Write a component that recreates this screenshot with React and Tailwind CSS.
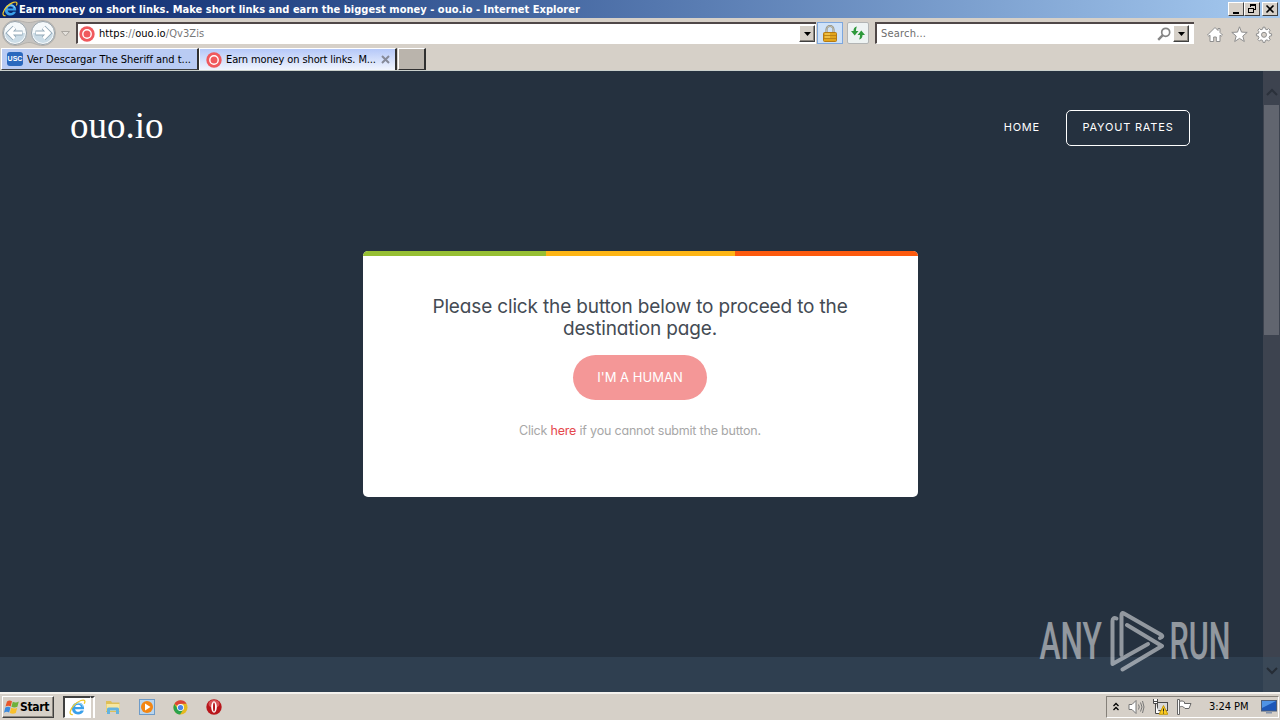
const tahoma = "font-['DejaVu_Sans_Condensed','DejaVu_Sans',sans-serif]";
const raised =
  "border border-t-white border-l-white border-r-[#404040] border-b-[#404040] bg-[#d6d0c8]";

function IeLogo({ className }) {
  return (
    <svg viewBox="0 0 16 16" className={className} fill="none">
      <path
        d="M14.200 9.600H5.700c.2 1.500 1.400 2.400 2.900 2.400 1.100 0 2-.4 2.500-1.200h2.900c-.8 2.300-2.900 3.700-5.500 3.700-3.300 0-5.700-2.300-5.700-5.600s2.400-5.700 5.700-5.700c3.500 0 5.900 2.600 5.700 6.400zM5.800 7.600h5.400C11 6.200 10 5.500 8.500 5.500S6 6.300 5.800 7.600z"
        fill="#3aa0ea"
      />
      <path d="M4.200 7.200C4.700 5.200 6.300 4 8.600 4c2.500 0 4.100 1.300 4.500 3.300" stroke="#9bdcfb" strokeWidth=".9" />
      <path
        d="M3.600 14.700C-.6 15.200.6 9.800 5.200 5.300 9.300 1.300 14 .1 14.800 1.700c.4.800.1 1.700-.5 2.800"
        stroke="#f0c92a"
        strokeWidth="1.200"
      />
    </svg>
  );
}

function OuoIcon() {
  return (
    <svg viewBox="0 0 16 16" className="size-4 shrink-0">
      <circle cx="8" cy="8" r="7.700" fill="#f0595d" />
      <circle cx="8" cy="8" r="4.200" fill="none" stroke="#fff" strokeWidth="1.400" />
    </svg>
  );
}

function DropArrow({ className }) {
  return (
    <span className={`flex items-center justify-center shadow-[inset_-1px_-1px_0_#8b867f] ${raised} ${className}`}>
      <svg viewBox="0 0 7 4" className="h-1 w-[7px]">
        <path d="M0 0h7L3.500 4z" fill="#000" />
      </svg>
    </span>
  );
}

function TitleBar() {
  return (
    <div className="flex h-[18px] items-center bg-linear-to-r from-[#0a246a] to-[#a6caf0] pr-[2px] pl-[2px]">
      <IeLogo className="size-4 shrink-0" />
      <span className="ml-px pt-px text-[11px] leading-4 font-bold tracking-[0.02px] whitespace-nowrap text-white">
        Earn money on short links. Make short links and earn the biggest money - ouo.io - Internet Explorer
      </span>
      <div className="ml-auto flex">
        <button className={`flex h-[14px] w-4 items-center justify-center ${raised}`}>
          <svg viewBox="0 0 12 12" className="size-3">
            <path d="M3 9h6v2H3z" />
          </svg>
        </button>
        <button className={`flex h-[14px] w-4 items-center justify-center ${raised}`}>
          <svg viewBox="0 0 12 12" className="size-3" fill="none" stroke="#000" shapeRendering="crispEdges">
            <path d="M4.500 4V1.500h5v5H8M4 2h6" />
            <path d="M2.500 5.500h5v4h-5zM2 5h6" />
          </svg>
        </button>
        <button className={`ml-[2px] flex h-[14px] w-4 items-center justify-center ${raised}`}>
          <svg viewBox="0 0 12 12" className="size-3" stroke="#000" strokeWidth="1.600">
            <path d="M2.500 2.500l7 7M9.500 2.500l-7 7" />
          </svg>
        </button>
      </div>
    </div>
  );
}

function NavButtons() {
  return (
    <svg viewBox="0 0 74 30" className="h-[30px] w-[74px] shrink-0" fill="none">
      <path
        d="M15 2.500c7 0 9 2 14 2s7-2 14-2a12.500 12.500 0 0 1 0 25c-7 0-9-3-14-3s-7 3-14 3a12.500 12.500 0 0 1 0-25z"
        fill="#c5c3c0"
        stroke="#b4b1ac"
      />
      {[15, 43].map((cx) => (
        <g key={cx}>
          <circle cx={cx} cy="15" r="11.500" fill="#f5f9fb" stroke="#98a3ab" />
          <path d={`M${cx - 10} 15a10 10 0 0 0 20 0z`} fill="#cbdce7" />
        </g>
      ))}
      <path d="M22.500 15H9.500M14.500 9.500L9 15l5.500 5.500" stroke="#93a9b8" strokeWidth="5" />
      <path d="M22 15H9.500M14.500 9.500L9 15l5.500 5.500" stroke="#fff" strokeWidth="3.200" />
      <path d="M35.500 15h13M43.500 9.500L49 15l-5.500 5.500" stroke="#93a9b8" strokeWidth="5" />
      <path d="M36 15h12.500M43.500 9.500L49 15l-5.500 5.500" stroke="#fff" strokeWidth="3.200" />
      <path d="M61.500 13.500h8l-4 4.500z" fill="#e4e1dc" stroke="#aaa6a0" />
    </svg>
  );
}

function AddressRow() {
  return (
    <div className="flex h-[30px] items-center">
      <NavButtons />
      <div className="ml-[2px] flex h-[22px] w-[740px] items-center border-t-2 border-b border-l-2 border-t-[#504848] border-b-white border-l-[#504848] bg-white pl-px">
        <OuoIcon />
        <span className="ml-[4px] pt-[2px] text-[11px] tracking-[0.08px] whitespace-nowrap text-[#777]">
          <span className="text-black">https</span>://<span className="text-black">ouo.io</span>/Qv3Zis
        </span>
        <DropArrow className="mr-px ml-auto h-[17px] w-4" />
      </div>
      <div className="ml-px flex h-[22px] w-[26px] items-center justify-center border border-[#7da7de] bg-[#cfe2f8]">
        <svg viewBox="0 0 14 17" className="h-[17px] w-[14px]">
          <path d="M3.500 8V4.500a3.500 3.500 0 0 1 7 0V8" fill="none" stroke="#8b8878" strokeWidth="2" />
          <path d="M3.500 8V4.500a3.500 3.500 0 0 1 7 0V8" fill="none" stroke="#d9d6c5" strokeWidth=".7" />
          <rect x=".5" y="7.500" width="13" height="9" rx="1" fill="#e2a51c" stroke="#b57a12" />
          <path d="M1 10.500h12M1 13.500h12" stroke="#bd8418" />
          <path d="M2 8.500h5v1H2zM2 11.500h5v1H2z" fill="#f9da6c" />
        </svg>
      </div>
      <div className="ml-[4px] flex h-[22px] w-[22px] items-center justify-center rounded-xs border border-[#b3b5b5] bg-[#eef3f3]">
        <svg viewBox="0 0 16 16" className="size-4" fill="#2f9a3c">
          <path d="M7 1.500C4.500 2 3.500 3.500 3.500 6H1l3.700 4.500L8.500 6H6c0-1.700.2-3 1-4.500z" />
          <path d="M9 14.500c2.500-.5 3.500-2 3.500-4.500H15l-3.700-4.500L7.500 10H10c0 1.700-.2 3-1 4.500z" />
        </svg>
      </div>
      <div className="ml-[6px] flex h-[22px] w-[319px] items-center border-t-2 border-b border-l-2 border-t-[#504848] border-b-white border-l-[#504848] bg-white pl-[4px]">
        <span className="pt-[2px] text-[11px] tracking-[0.2px] text-[#6d6d6d]">Search...</span>
        <svg viewBox="0 0 14 14" className="ml-auto size-[14px]" fill="none" stroke="#858585">
          <circle cx="8.700" cy="5.300" r="4" strokeWidth="1.700" />
          <path d="M5.800 8.200L1.200 12.800" strokeWidth="2.400" />
        </svg>
        <DropArrow className="mr-[5px] ml-[2px] h-[17px] w-4" />
      </div>
      <svg viewBox="0 0 68 18" className="mt-[4px] ml-[12px] h-[18px] w-[68px]" fill="#fff" stroke="#8e8e8e">
        <path d="M9 1.500L1.500 9l1.300 1.200L4 9.200v6.300h3.700v-4.500h2.600v4.500H14V9.200l1.200 1L16.500 9 14 6.500v-4h-2v2z" />
        <path d="M33.500.8l2 5.300 5.700.3-4.400 3.600 1.500 5.500-4.800-3.100-4.800 3.100 1.500-5.500-4.400-3.600 5.700-.3z" />
        <path d="M56.700 3.100L57 1.200h2l.3 1.900 1.700.7 1.600-1.200 1.600 1.600-1.200 1.600.7 1.700 1.900.3v2l-1.900.3-.7 1.700 1.200 1.600-1.600 1.600-1.600-1.200-1.700.7-.3 1.900h-2l-.3-1.900-1.700-.7-1.600 1.200-1.600-1.600 1.200-1.600-.7-1.700-1.900-.3v-2l1.900-.3.7-1.700-1.200-1.600 1.600-1.600L55 3.800z" />
        <circle cx="58" cy="8.800" r="2.500" fill="#d6d0c8" />
      </svg>
    </div>
  );
}

function TabRow() {
  return (
    <div className="flex h-[23px] items-start border-b border-[#c9cfcb] pl-px">
      <div className="flex h-[22px] w-[198px] items-center border-t border-r-2 border-b border-l border-t-white border-r-[#303030] border-b-[#404040] border-l-white bg-[#b9cbf3] pl-[5px]">
        <span className="flex h-[14px] w-4 items-center justify-center rounded-[3px] bg-[#2a68bd] font-['Liberation_Sans',sans-serif] text-[7px] font-bold text-white">
          USC
        </span>
        <span className="ml-[4px] pt-[2px] text-[11px] tracking-[-0.04px] whitespace-nowrap">
          Ver Descargar The Sheriff and t...
        </span>
      </div>
      <div className="flex h-[22px] w-[198px] items-center border-t border-r-2 border-l border-t-white border-r-[#303030] border-l-white bg-linear-to-b from-[#b5c8f8] to-[#f1f5fd] pl-[6px]">
        <OuoIcon />
        <span className="ml-[4px] pt-[2px] text-[11px] tracking-[-0.12px] whitespace-nowrap">
          Earn money on short links. M...
        </span>
        <svg viewBox="0 0 9 9" className="mr-[5px] ml-auto size-[9px]" stroke="#868a98" strokeWidth="2">
          <path d="M1 1l7 7M8 1L1 8" />
        </svg>
      </div>
      <div className="ml-px h-[22px] w-[28px] border-t border-r-2 border-b border-l border-t-white border-r-[#303030] border-b-[#303030] border-l-white bg-[#bab4ac]" />
    </div>
  );
}

function Card() {
  return (
    <main className="mx-auto h-[246px] w-[555px] overflow-hidden rounded-[5px] bg-white text-center font-['Inter',sans-serif] [font-feature-settings:'cv11']">
      <div className="flex h-[5px]">
        <span className="w-[183px] bg-[#96bf33]" />
        <span className="w-[189px] bg-[#fdb515]" />
        <span className="flex-1 bg-[#fc5a0e]" />
      </div>
      <h1 className="mt-[40px] text-[19px] leading-[22px] tracking-[-0.15px] text-[#444b54]">
        Please click the button below to proceed to the
        <br />
        destination page.
      </h1>
      <button className="mt-[15px] h-[45px] w-[134px] rounded-full bg-[#f49797] text-[13px] tracking-[0.02px] text-white">
        I'M A HUMAN
      </button>
      <p className="mt-[21px] text-[12.500px] leading-[20px] tracking-[-0.2px] text-[#a7a7a7]">
        Click <a className="text-[#e5484d]">here</a> if you cannot submit the button.
      </p>
    </main>
  );
}

function Watermark() {
  return (
    <svg
      viewBox="0 0 200 64"
      className="absolute right-[44px] bottom-[19px] h-[64px] w-[200px] opacity-50"
      fill="#fff"
    >
      <g fontFamily="Roboto, sans-serif" fontSize="51" fontWeight="500">
        <text transform="translate(3.500 50) scale(.62 1)">ANY</text>
        <text transform="translate(133.500 50) scale(.6 1)">RUN</text>
      </g>
      <g fill="none" stroke="#fff" strokeWidth="4" strokeLinejoin="round" strokeLinecap="round">
        <path d="M85.500 46V6q0-3 2.500-1.500L125.500 26q2 1.500-1.500 3" />
        <path d="M80.500 9.500Q76.500 8 76.500 12v43L112 35" />
        <path d="M91 16l35 21-39.500 23.500" />
      </g>
    </svg>
  );
}

function Page() {
  return (
    <div className="relative flex h-[621px] bg-[#25313f]">
      <div className="flex w-[1263px] flex-col">
        <header className="mt-[39px] flex h-9 items-center pr-[73px] pl-[70px] text-white">
          <span className="pb-[5px] font-['Liberation_Serif',serif] text-[37px] leading-9">ouo.io</span>
          <nav className="ml-auto flex items-center font-['Inter',sans-serif] text-[11px] tracking-[0.8px]">
            <a className="pb-[2px]">HOME</a>
            <a className="ml-[26px] flex h-9 w-[124px] items-center justify-center rounded-[5px] border border-white pb-[2px]">
              PAYOUT RATES
            </a>
          </nav>
        </header>
        <div className="mt-[105px] pl-[17px]">
          <Card />
        </div>
        <div className="mt-auto h-[35px] bg-[#2f3f50]" />
      </div>
      <div className="flex w-[17px] flex-col items-center bg-[#3d434f]">
        <svg viewBox="0 0 12 8" className="mt-[17px] h-2 w-3" fill="none" stroke="#2b313b" strokeWidth="2">
          <path d="M1 7l5-5 5 5" />
        </svg>
        <div className="mt-[9px] h-[230px] w-[15px] bg-[#61656f]" />
        <div className="mt-auto flex h-[35px] w-full justify-center bg-[#3a4857]">
          <svg viewBox="0 0 12 8" className="mt-[10px] h-2 w-3" fill="none" stroke="#252c35" strokeWidth="2">
            <path d="M1 1l5 5 5-5" />
          </svg>
        </div>
      </div>
      <Watermark />
    </div>
  );
}

function Taskbar() {
  return (
    <div className="flex h-7 items-center border-t-2 border-[#f4f2ee] bg-[#d6d0c8] pl-[2px]">
      <button className={`flex h-[22px] w-[52px] items-center shadow-[inset_-1px_-1px_0_#8b867f] ${raised}`}>
        <svg viewBox="0 0 16 16" className="ml-px size-4 shrink-0">
          <path d="M3 2.500C5 1 6.500 1.500 8 2.300L6.700 7.500C5 6.500 3.500 6.500 1.500 7.600z" fill="#e8562a" />
          <path d="M8.800 2.700c2 1 4 1 6-.2l-1.400 5.300c-2 1-4 1-6 0z" fill="#6fb13c" />
          <path d="M1.300 8.600c2-1.100 3.500-1 5.200-.1l-1.400 5C3.500 12.600 2 12.600 0 13.700z" fill="#3b8ade" />
          <path d="M7.200 8.800c2 1 4 1 6-.1l-1.400 5.200c-2 1.100-4 1-6 0z" fill="#f9c02c" />
        </svg>
        <span className="text-[12px] font-bold tracking-[-0.3px]">Start</span>
      </button>
      <div className="ml-[9px] flex h-[22px] w-[28px] items-center justify-center border-t-2 border-r border-b border-l-2 border-t-[#404040] border-r-white border-b-white border-l-[#404040] bg-white">
        <IeLogo className="size-[17px]" />
      </div>
      <div className="h-[22px] w-1 border-t-2 border-r-2 border-t-[#404040] border-r-white" />
      <div className="ml-[10px] flex items-center gap-[17px]">
        <svg viewBox="0 0 16 16" className="size-4">
          <path d="M1 2h5l1 1.500h7.500V13H1z" fill="#dfbf58" />
          <path d="M1.500 5h13v7h-13z" fill="#f7e7a0" />
          <path d="M2 15v-5q0-1.500 1.500-1.500h9Q14 8.500 14 10v5h-3v-3.500H5V15z" fill="#64b3df" />
        </svg>
        <svg viewBox="0 0 16 16" className="ml-[1px] size-4">
          <rect x=".5" y=".5" width="15" height="15" fill="#b9d5ee" stroke="#6e9bc8" />
          <circle cx="8" cy="8" r="6" fill="#f38613" />
          <path d="M6 4.500v7L11.500 8z" fill="#fff" />
        </svg>
        <svg viewBox="0 0 16 16" className="ml-[1px] size-[15px]">
          <circle cx="8" cy="8" r="7.500" fill="#e6b91f" />
          <path d="M8 8L1.500 4.200a7.500 7.500 0 0 1 13-.1H8z" fill="#dc4437" />
          <path d="M1.500 4.200A7.500 7.500 0 0 0 7.500 15.500L11 10 5 9.700z" fill="#2ba24c" />
          <circle cx="8" cy="8" r="3.700" fill="#fff" />
          <circle cx="8" cy="8" r="2.800" fill="#4a86e8" />
        </svg>
        <svg viewBox="0 0 16 16" className="ml-[1px] size-4">
          <circle cx="8" cy="8" r="7.700" fill="#b8161b" />
          <ellipse cx="8" cy="5" rx="5.500" ry="4" fill="#d95458" />
          <ellipse cx="8" cy="8" rx="2.800" ry="5.800" fill="#fff" />
          <ellipse cx="8" cy="8" rx="1" ry="4.600" fill="#b8161b" />
        </svg>
      </div>
      <div className="mr-px ml-auto flex h-[22px] w-[173px] items-center border border-t-[#858079] border-r-white border-b-white border-l-[#858079]">
        <svg viewBox="0 0 8 9" className="mb-[2px] ml-[5px] h-[9px] w-2" fill="none" stroke="#000" strokeWidth="1.300">
          <path d="M1.500 4L4 1.500 6.500 4M1.500 8L4 5.500 6.500 8" />
        </svg>
        <svg viewBox="0 0 17 16" className="ml-[8px] h-4 w-[17px]" fill="none" stroke="#777">
          <path d="M1 5.500h3l4-4v13l-4-4H1z" fill="#fff" />
          <path d="M10.500 5.500q1.500 2.500 0 5M12.500 3.500q3 4.500 0 9M14.500 2q3 6 0 12" />
        </svg>
        <svg viewBox="0 0 16 16" className="ml-[7px] size-4" fill="none" stroke="#4a4a4a">
          <rect x="5.500" y="3.500" width="10" height="8" fill="#d9d9d9" />
          <path d="M1.500 0v4.500h4V0M3.500 4.500v10h4M2 2.500h3" fill="#fff" />
          <path d="M11.500 6.500l4.300 8.800H7.200z" fill="#fccc20" stroke="#c49a0d" />
          <path d="M11.500 9.500v3M11.500 13.500v1" stroke="#222" />
        </svg>
        <svg viewBox="0 0 16 16" className="ml-[8px] size-4" stroke="#666" fill="#fff">
          <path d="M1.500.5h2v15h-2z" />
          <path d="M3.500 2.500c2-1 3.500-.5 5 .5v1.500h6.500l-2 5h-4l-1.500-1.500c-1.500-1-2.500-.5-4 0z" />
        </svg>
        <span className="ml-[17px] pt-px text-[11px] tracking-[-0.05px] whitespace-nowrap">3:24 PM</span>
        <svg viewBox="0 0 16 14" className="mr-px ml-auto h-[14px] w-4">
          <rect x=".5" y=".5" width="15" height="10.500" fill="#1d57b8" stroke="#4b5c78" />
          <path d="M1 1h14L1 8z" fill="#4f93e6" />
          <path d="M5 12h6v1.500H5z" fill="#8393ac" />
        </svg>
      </div>
    </div>
  );
}

export default function App() {
  return (
    <div className={`h-[720px] w-[1280px] overflow-hidden bg-[#d6d0c8] text-black ${tahoma}`}>
      <TitleBar />
      <AddressRow />
      <TabRow />
      <Page />
      <Taskbar />
    </div>
  );
}
